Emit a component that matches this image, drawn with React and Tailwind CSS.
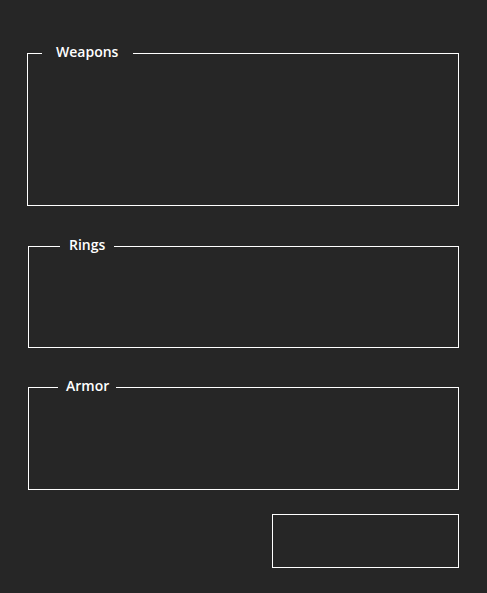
import React from 'react';

const Section = ({ title, className, legendClass, children }) => (
  <fieldset className={`border border-white ${className}`}>
    <legend className={`text-white text-[14px] leading-[18px] pb-[2px] font-semibold ${legendClass}`}>
      {title}
    </legend>
    {children}
  </fieldset>
);

const App = () => {
  return (
    <div
      className="min-h-[593px] w-full bg-[#262626] pt-[43px] flex flex-col"
      style={{ fontFamily: '"Open Sans", "Noto Sans", sans-serif' }}
    >
      <Section
        title="Weapons"
        className="ml-[27px] w-[432px] h-[163px]"
        legendClass="ml-[14px] pl-[14px] pr-[15px]"
      />
      <Section
        title="Rings"
        className="ml-[28px] w-[431px] h-[112px] mt-[30px]"
        legendClass="ml-[31px] pl-[9px] pr-[9px]"
      />
      <Section
        title="Armor"
        className="ml-[28px] w-[431px] h-[113px] mt-[29px]"
        legendClass="ml-[29px] pl-[8px] pr-[7px]"
      />
      <div className="ml-[272px] mt-[24px] w-[187px] h-[54px] border border-white" />
    </div>
  );
};

export default App;
